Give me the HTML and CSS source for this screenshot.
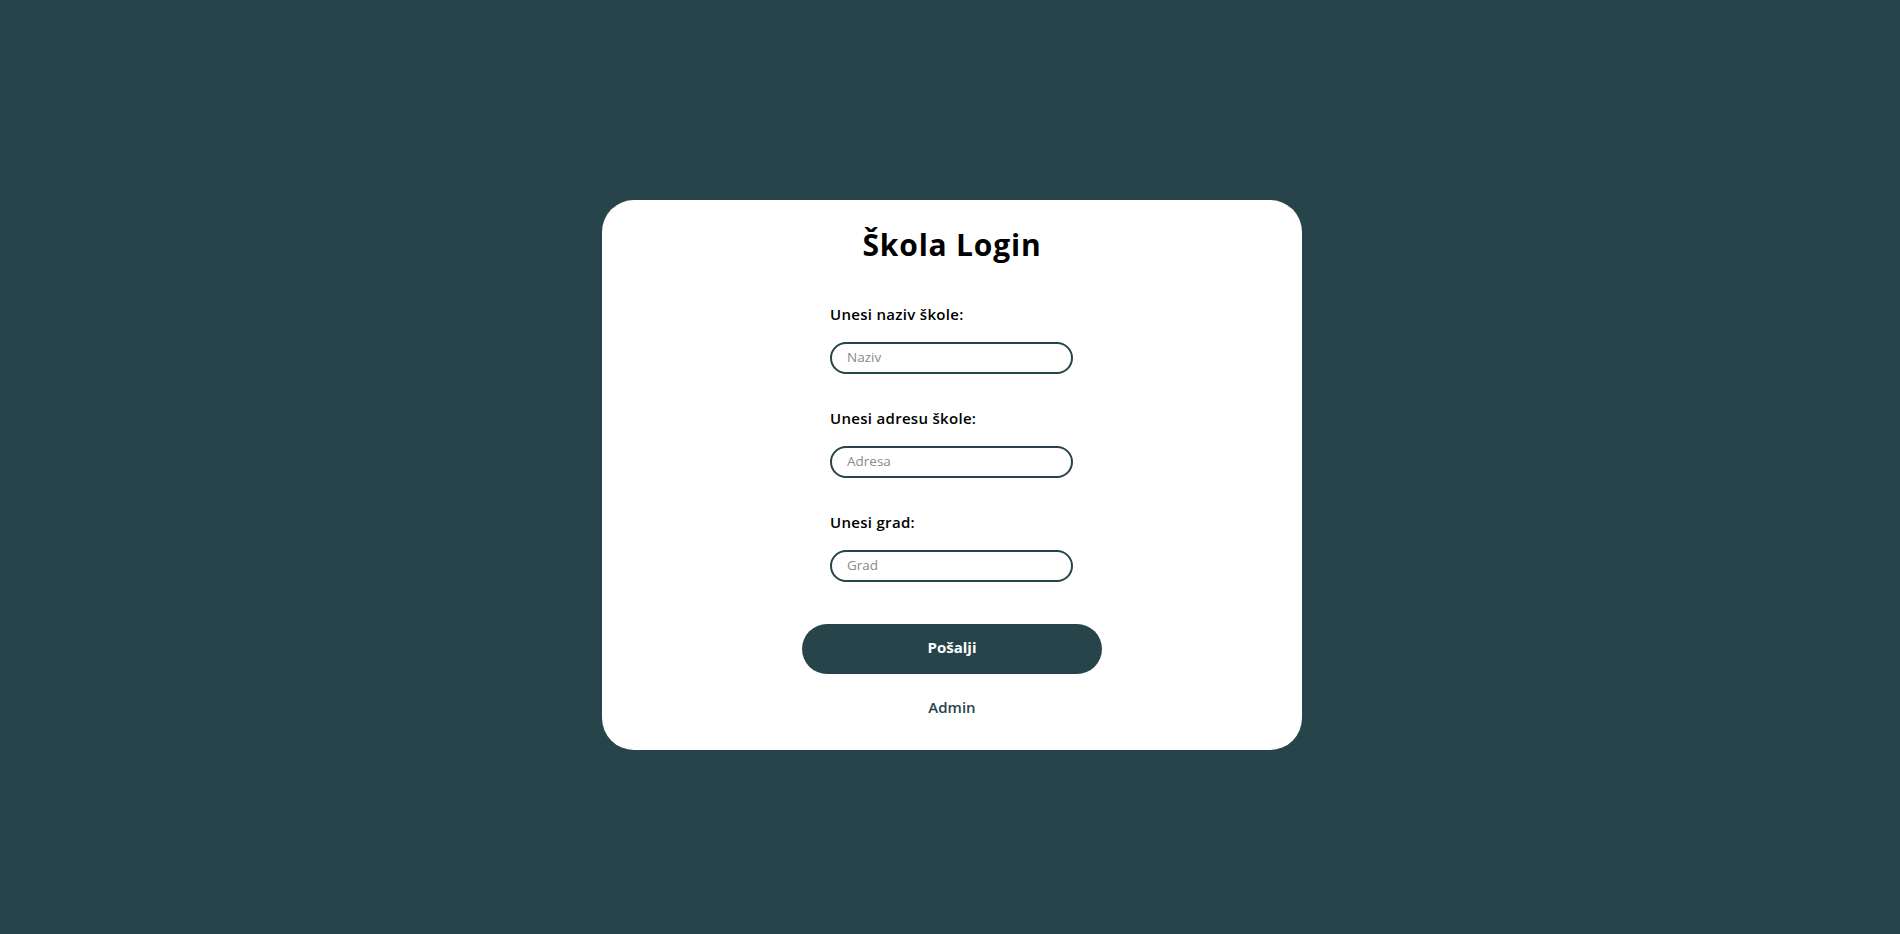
FILE: index.html
```html
<!DOCTYPE html>
<html lang="hr">
<head>
<meta charset="utf-8">
<title>Škola Login</title>
<link rel="stylesheet" href="styles.css">
</head>
<body>
<main class="page">
  <form class="card">
    <h1 class="title">Škola Login</h1>
    <div class="fields">
      <div class="field">
        <label class="label" for="naziv">Unesi naziv škole:</label>
        <input class="input" id="naziv" type="text" placeholder="Naziv">
      </div>
      <div class="field">
        <label class="label" for="adresa">Unesi adresu škole:</label>
        <input class="input" id="adresa" type="text" placeholder="Adresa">
      </div>
      <div class="field">
        <label class="label" for="grad">Unesi grad:</label>
        <input class="input" id="grad" type="text" placeholder="Grad">
      </div>
    </div>
    <button class="submit" type="button">Pošalji</button>
    <a class="admin" href="#">Admin</a>
  </form>
</main>
</body>
</html>
```

FILE: styles.css
```css
* { box-sizing: border-box; }

html, body {
  margin: 0;
  height: 100%;
}

body {
  background: #26444a;
  font-family: "Open Sans", "Liberation Sans", sans-serif;
}

.page {
  display: flex;
  justify-content: center;
  padding-top: 200px;
  padding-left: 4px;
}

.card {
  width: 700px;
  height: 550px;
  background: #ffffff;
  border-radius: 32px;
  display: flex;
  flex-direction: column;
  align-items: center;
  padding-top: 27px;
}

.title {
  margin: 0;
  font-size: 30px;
  line-height: 36px;
  font-weight: 700;
  color: #000;
  letter-spacing: 0.8px;
}

.fields {
  width: 243px;
  margin-top: 41px;
  margin-right: 1px;
  display: flex;
  flex-direction: column;
  gap: 34px;
}

.field {
  display: flex;
  flex-direction: column;
  gap: 18px;
}

.label {
  font-size: 15px;
  line-height: 20px;
  font-weight: 600;
  color: #000;
  letter-spacing: 0.3px;
}

.input {
  width: 243px;
  height: 32px;
  border: 2px solid #26444a;
  border-radius: 16px;
  padding: 0 15px 2px;
  font-family: inherit;
  font-size: 13.5px;
  color: #222;
  outline: none;
  background: #fff;
}

.input::placeholder {
  color: #8a8a8a;
}

.submit {
  margin-top: 42px;
  width: 300px;
  height: 50px;
  border: none;
  border-radius: 25px;
  background: #26444a;
  color: #fff;
  font-family: inherit;
  font-size: 15px;
  font-weight: 700;
  padding: 0 0 4px;
  cursor: pointer;
}

.admin {
  margin-top: 23px;
  font-size: 15px;
  line-height: 20px;
  font-weight: 600;
  color: #26444a;
  text-decoration: none;
}
```
